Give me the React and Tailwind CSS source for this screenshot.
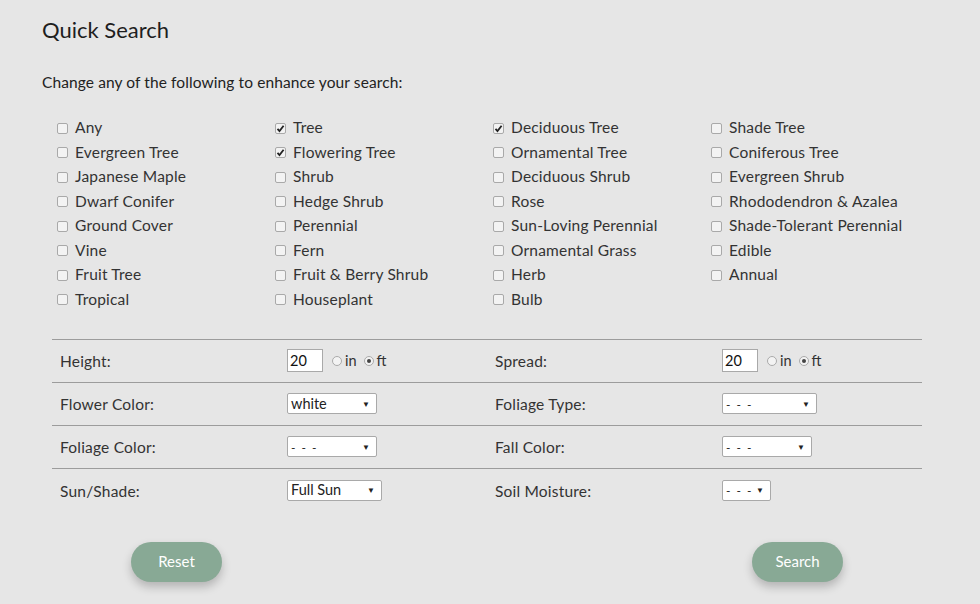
import React from 'react';

const types = [
  ['Any', false], ['Tree', true], ['Deciduous Tree', true], ['Shade Tree', false],
  ['Evergreen Tree', false], ['Flowering Tree', true], ['Ornamental Tree', false], ['Coniferous Tree', false],
  ['Japanese Maple', false], ['Shrub', false], ['Deciduous Shrub', false], ['Evergreen Shrub', false],
  ['Dwarf Conifer', false], ['Hedge Shrub', false], ['Rose', false], ['Rhododendron & Azalea', false],
  ['Ground Cover', false], ['Perennial', false], ['Sun-Loving Perennial', false], ['Shade-Tolerant Perennial', false],
  ['Vine', false], ['Fern', false], ['Ornamental Grass', false], ['Edible', false],
  ['Fruit Tree', false], ['Fruit & Berry Shrub', false], ['Herb', false], ['Annual', false],
  ['Tropical', false], ['Houseplant', false], ['Bulb', false],
];

const Check = ({ checked }) => (
  <span className="w-[11px] h-[11px] rounded-[2px] border border-[#a9a9a9] bg-[#f3f3f3] flex items-center justify-center shrink-0">
    {checked && (
      <svg width="9" height="9" viewBox="0 0 9 9">
        <path d="M1.5 4.8 L3.5 7 L7.6 1.8" fill="none" stroke="#222" strokeWidth="1.8" />
      </svg>
    )}
  </span>
);

const Radio = ({ checked }) => (
  <span className="w-[10px] h-[10px] rounded-full border border-[#aaa] bg-[#f3f3f3] flex items-center justify-center">
    {checked && <span className="w-[4px] h-[4px] rounded-full bg-[#444]" />}
  </span>
);

const Select = ({ value, width }) => (
  <div
    className="h-[21px] bg-white border border-[#a9a9a9] rounded-[2px] flex items-center justify-between pl-[3px] pr-[6px] text-[14.5px] text-[#222]"
    style={{ width }}
  >
    <span className={value === '- - -' ? 'text-[12px] tracking-[1.5px] pt-[2px]' : ''}>{value}</span>
    <span className="text-[8px]">▼</span>
  </div>
);

const Size = () => (
  <div className="flex items-center text-[14.5px] text-[#333]">
    <div className="w-[36px] h-[23px] bg-white border border-[#a9a9a9] pl-[2px] flex items-center text-[14.5px] text-[#111]">20</div>
    <span className="ml-[9px]"><Radio /></span>
    <span className="ml-[3px]">in</span>
    <span className="ml-[7px]"><Radio checked /></span>
    <span className="ml-[3px]">ft</span>
  </div>
);

const rows = [
  ['Height:', <Size />, 'Spread:', <Size />],
  ['Flower Color:', <Select value="white" width={90} />, 'Foliage Type:', <Select value="- - -" width={95} />],
  ['Foliage Color:', <Select value="- - -" width={90} />, 'Fall Color:', <Select value="- - -" width={90} />],
  ['Sun/Shade:', <Select value="Full Sun" width={95} />, 'Soil Moisture:', <Select value="- - -" width={49} />],
];

export default function App() {
  return (
    <div
      className="w-[980px] h-[604px] bg-[#e6e6e6] text-[#222] overflow-hidden"
      style={{ fontFamily: 'Lato, "Noto Sans", sans-serif' }}
    >
      <div className="pl-[42px] pt-[15px]">
        <h1 className="text-[22px] leading-[30px] text-[#1e1e1e]">Quick Search</h1>
        <p className="mt-[27px] text-[15.5px] leading-[20px] tracking-[0.1px]">Change any of the following to enhance your search:</p>
      </div>

      <div className="pl-[57px] mt-[26px] grid grid-cols-[218px_218px_218px_218px] gap-y-[4.5px]">
        {types.map(([label, checked]) => (
          <label key={label} className="flex items-center gap-[7px] h-[20px] text-[15.5px] tracking-[0.2px] text-[#333]">
            <Check checked={checked} />
            <span>{label}</span>
          </label>
        ))}
      </div>

      <div className="ml-[52px] mt-[29px] w-[870px] border-t border-[#9c9c9c]">
        {rows.map((r, i) => (
          <div
            key={i}
            className={`grid grid-cols-[235px_200px_235px_200px] items-center h-[43px] ${i < rows.length - 1 ? 'border-b border-[#9c9c9c]' : ''}`}
          >
            <div className="pl-[8px] pt-[3px] text-[15.5px] tracking-[0.2px] text-[#333]">{r[0]}</div>
            <div>{r[1]}</div>
            <div className="pl-[8px] pt-[3px] text-[15.5px] tracking-[0.2px] text-[#333]">{r[2]}</div>
            <div>{r[3]}</div>
          </div>
        ))}
      </div>

      <div className="flex justify-between pl-[131px] pr-[137px] mt-[30px]">
        <button className="w-[91px] h-[40px] rounded-full bg-[#88a995] text-white text-[15px] shadow-[0_5px_10px_rgba(0,0,0,0.22)]">
          Reset
        </button>
        <button className="w-[91px] h-[40px] rounded-full bg-[#88a995] text-white text-[15px] shadow-[0_5px_10px_rgba(0,0,0,0.22)]">
          Search
        </button>
      </div>
    </div>
  );
}
